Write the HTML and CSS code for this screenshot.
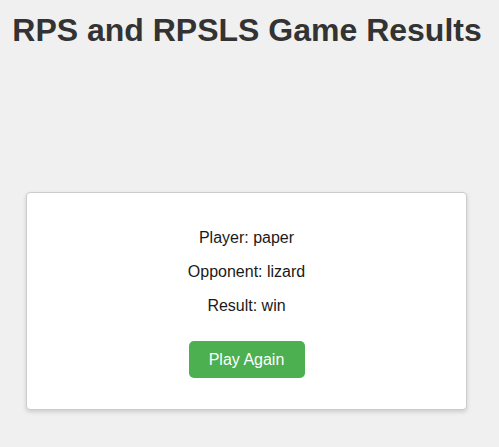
FILE: index.html
```html
<!DOCTYPE html>
<html lang="en">
<head>
<meta charset="utf-8">
<title>RPS and RPSLS Game Results</title>
<link rel="stylesheet" href="styles.css">
</head>
<body>
<h1 class="title">RPS and RPSLS Game Results</h1>
<div class="card">
  <p class="line">Player: paper</p>
  <p class="line">Opponent: lizard</p>
  <p class="line">Result: win</p>
  <button class="btn">Play Again</button>
</div>
</body>
</html>
```
FILE: styles.css
```css
html, body {
  margin: 0;
  padding: 0;
}
body {
  background: #f0f0f0;
  font-family: "Liberation Sans", Arial, sans-serif;
  color: #333;
  padding: 12px 0 8px;
}
.title {
  margin: 0;
  width: 494px;
  text-align: center;
  font-size: 32px;
  font-weight: bold;
  color: #333;
}
.card {
  margin: 143px 0 0 26px;
  background: #fff;
  border: 1px solid #ccc;
  border-radius: 4px;
  box-shadow: 0 2px 4px rgba(0,0,0,0.15);
  padding: 20px 20px 31px;
  text-align: center;
  width: 399px;
}
.line {
  margin: 16px 0;
  font-size: 16px;
  line-height: 17.75px;
  color: #1a1a1a;
}
.btn {
  margin-top: 11px;
  background: #4caf50;
  color: #fff;
  border: none;
  border-radius: 5px;
  font-family: "Liberation Sans", Arial, sans-serif;
  font-size: 16px;
  padding: 0;
  width: 116px;
  height: 37px;
  vertical-align: top;
}
```
